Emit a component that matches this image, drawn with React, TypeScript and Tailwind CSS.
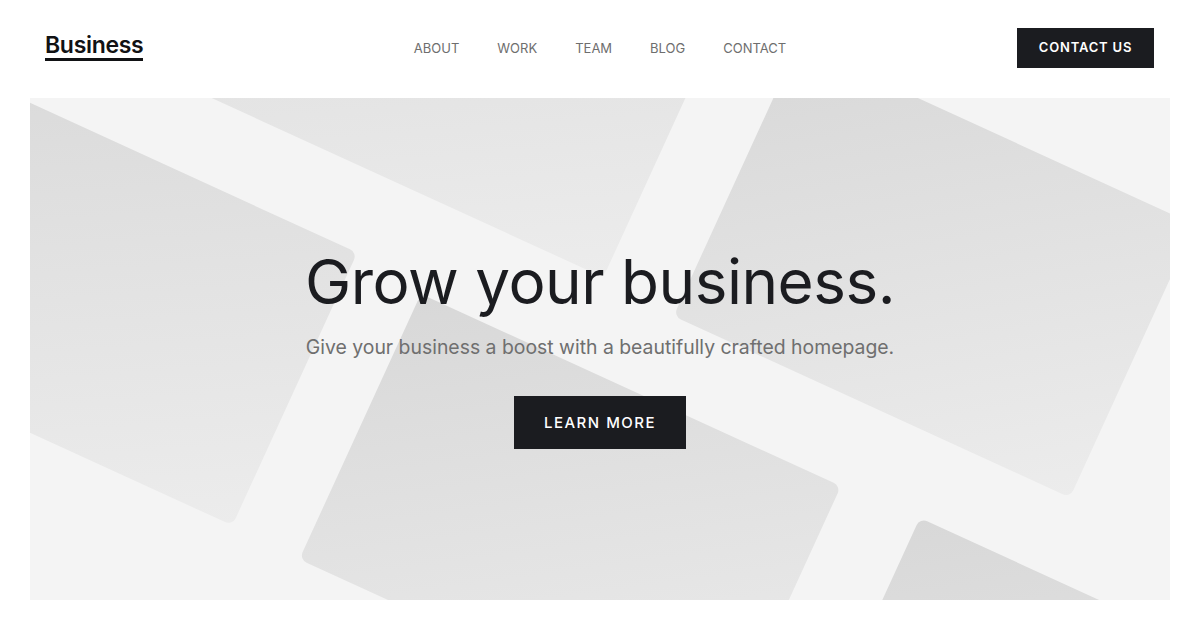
const font = "font-['Inter','Liberation_Sans',sans-serif]";

const navLinks = ['About', 'Work', 'Team', 'Blog', 'Contact'];

// tiles in the rotated frame: [x, y, w, h]
const tiles: [number, number, number, number][] = [
  [-120, 81, 550, 300],
  [120, -299, 544, 300],
  [505, 92, 462, 292],
  [744, -293, 436, 300],
  [1052, 88, 450, 300],
];

function HeroPattern() {
  return (
    <svg
      className="absolute inset-0 h-full w-full"
      viewBox="30 98 1140 502"
      preserveAspectRatio="none"
      aria-hidden="true"
    >
      <defs>
        <linearGradient id="tile" x1="0" y1="0" x2="1" y2="1">
          <stop offset="0" stopColor="#d8d8d8" />
          <stop offset="1" stopColor="#ececec" />
        </linearGradient>
      </defs>
      <g transform="rotate(24.6)">
        {tiles.map(([x, y, w, h], i) => (
          <rect key={i} x={x} y={y} width={w} height={h} rx={8} fill="url(#tile)" />
        ))}
      </g>
    </svg>
  );
}

export default function App() {
  return (
    <div className={`min-h-screen w-full bg-white ${font}`}>
      <header className="flex h-[98px] items-center justify-between pl-[45px] pr-[46px]">
        <a href="#" className="relative -mt-[3px] text-[23px] font-semibold leading-none text-[#111214] border-b-[3px] border-[#111214] pb-[1px] tracking-[-0.3px]">
          Business
        </a>
        <nav className="absolute left-1/2 -translate-x-1/2 flex items-center gap-[38px]">
          {navLinks.map((l) => (
            <a key={l} href="#" className="text-[13px] uppercase tracking-[0px] text-[#6e6e6e]">
              {l}
            </a>
          ))}
        </nav>
        <button
          type="button"
          className="h-[40px] w-[137px] -mt-[2px] bg-[#1b1c20] text-[13px] font-semibold uppercase tracking-[0.8px] text-white"
        >
          Contact us
        </button>
      </header>

      <section className="relative mx-[30px] h-[502px] overflow-hidden bg-[#f4f4f4]">
        <HeroPattern />
        <div className="relative flex h-full flex-col items-center pt-[153px]">
          <h1 className="text-[62px] font-normal leading-none tracking-[-0.5px] text-[#1b1c20]">
            Grow your business.
          </h1>
          <p className="mt-[25px] text-[19.4px] leading-none text-[#6f6f6f]">
            Give your business a boost with a beautifully crafted homepage.
          </p>
          <button
            type="button"
            className="mt-[39px] h-[53px] w-[172px] bg-[#1b1c20] text-[15px] font-medium uppercase tracking-[1.5px] text-white"
          >
            Learn more
          </button>
        </div>
      </section>
    </div>
  );
}
